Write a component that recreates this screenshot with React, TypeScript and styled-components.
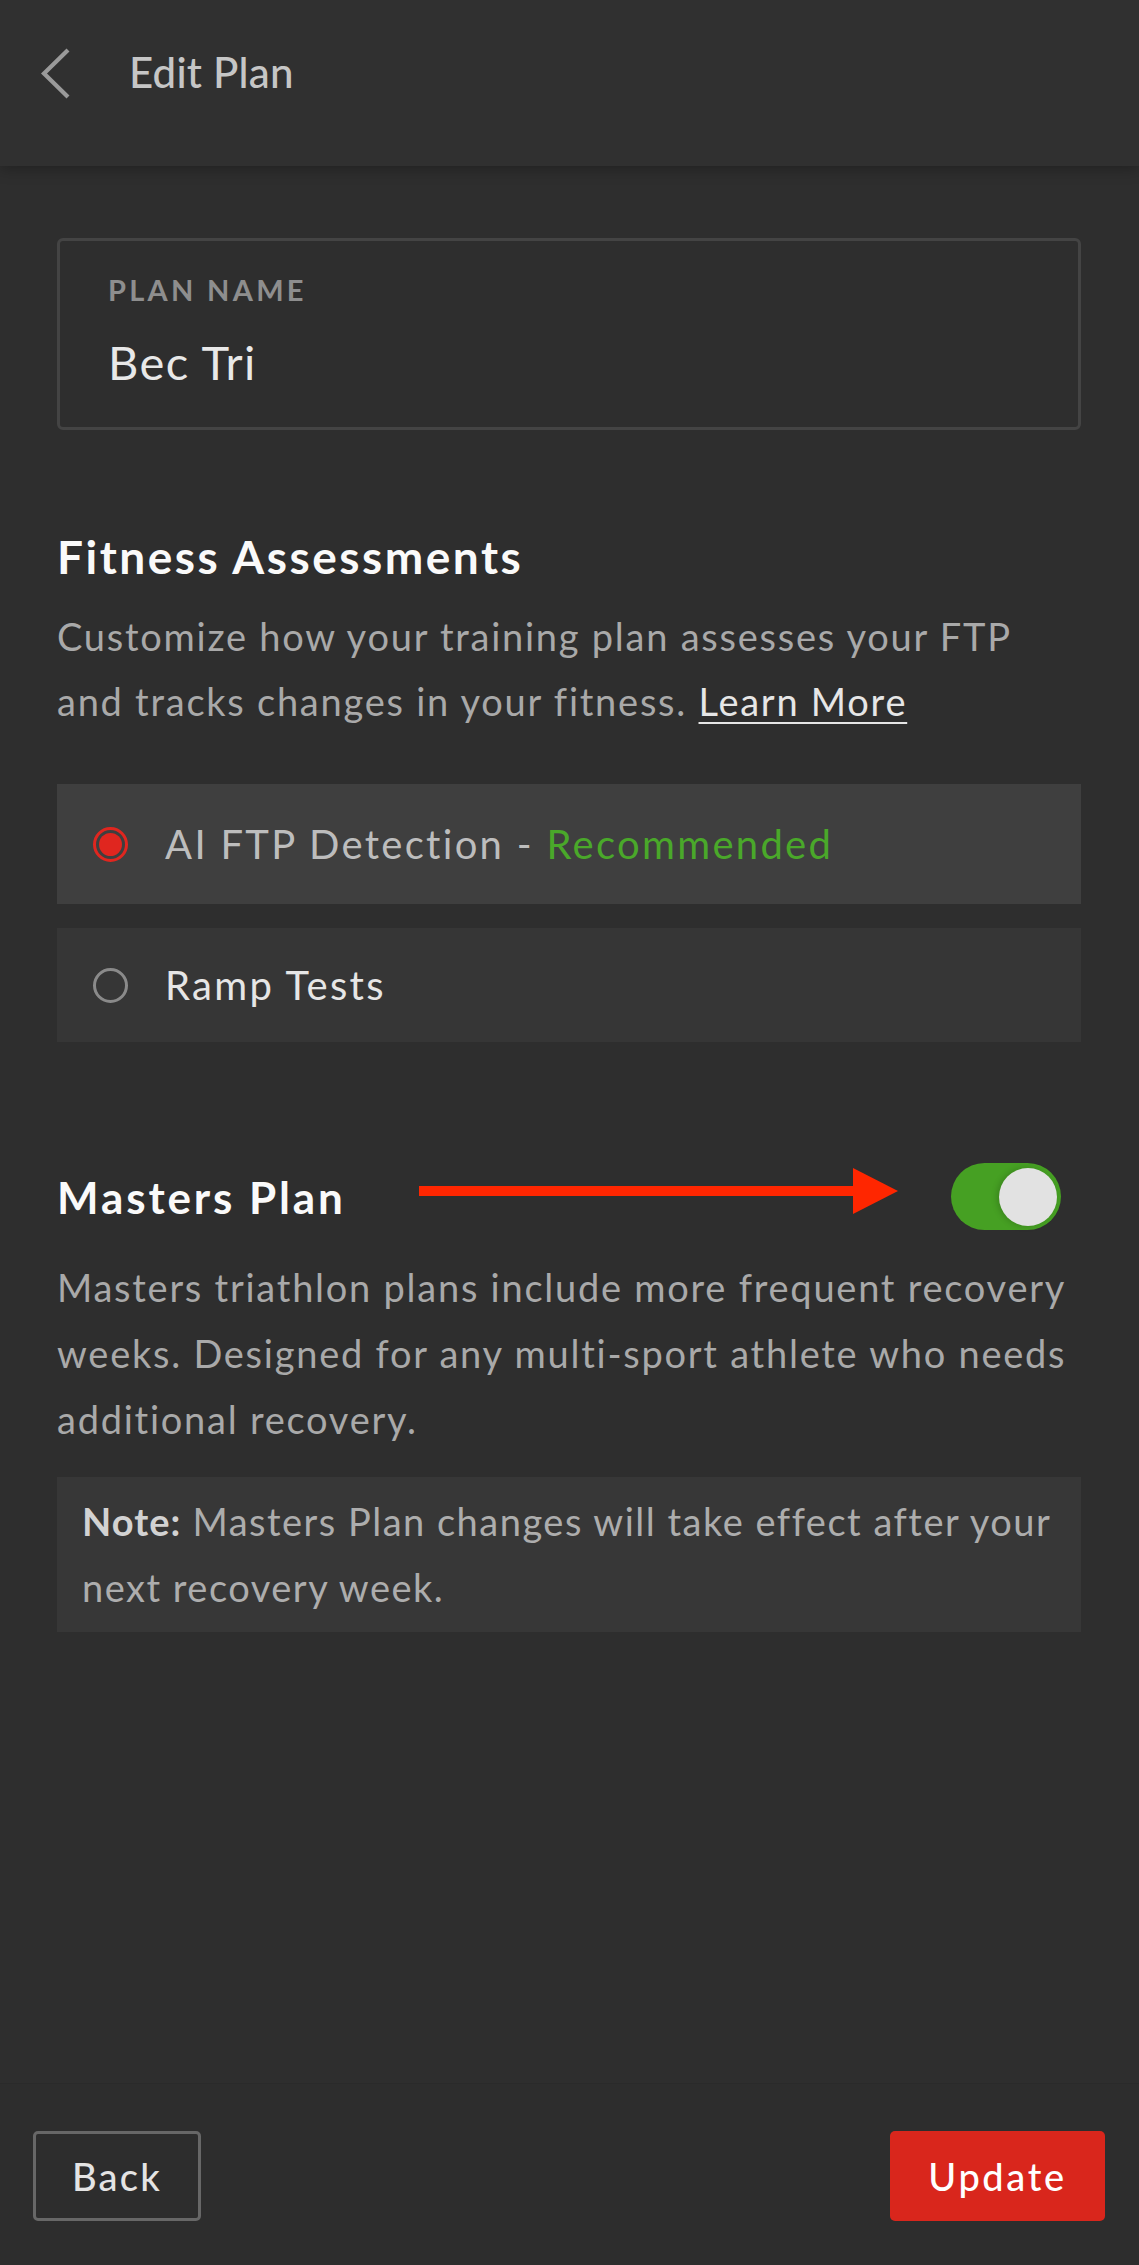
import React from "react";
import styled, { createGlobalStyle } from "styled-components";

const Global = createGlobalStyle`
  * { box-sizing: border-box; }
  html, body { margin: 0; padding: 0; background: #2e2e2e; }
  body { font-family: "Lato", "Noto Sans", sans-serif; -webkit-font-smoothing: antialiased; }
`;

const Page = styled.div`
  min-height: 100vh;
  display: flex;
  flex-direction: column;
  background: #2e2e2e;
`;

const Header = styled.header`
  height: 166px;
  flex-shrink: 0;
  background: #303030;
  display: flex;
  align-items: flex-start;
  padding: 48px 0 0 40px;
  gap: 59px;
  box-shadow: 0 3px 14px rgba(0, 0, 0, 0.28);
  position: relative;
  z-index: 1;
`;

const Title = styled.h1`
  margin: 0;
  font-size: 42px;
  line-height: 48px;
  font-weight: 500;
  color: #c6c6c6;
  letter-spacing: 0.2px;
`;

const Main = styled.main`
  flex: 1;
  display: flex;
  flex-direction: column;
  padding: 72px 58px 0 57px;
`;

const NameBox = styled.div`
  height: 192px;
  border: 3px solid #444444;
  border-radius: 6px;
  padding: 31px 48px 0;
  display: flex;
  flex-direction: column;
`;

const FieldLabel = styled.div`
  font-size: 29px;
  line-height: 36px;
  font-weight: 700;
  color: #8e8e8e;
  letter-spacing: 3.3px;
`;

const FieldValue = styled.div`
  margin-top: 26px;
  font-size: 47px;
  line-height: 56px;
  color: #e8e8e8;
  letter-spacing: 1.4px;
`;

const SectionTitle = styled.h2<{ $top?: number }>`
  margin: ${(p) => p.$top ?? 0}px 0 0;
  font-size: 46px;
  line-height: 54px;
  font-weight: 700;
  color: #fafafa;
  letter-spacing: 2.5px;
`;

const Paragraph = styled.p<{ $top: number; $lh: number }>`
  margin: ${(p) => p.$top}px 0 0;
  font-size: 38px;
  line-height: ${(p) => p.$lh}px;
  color: #a9a9a9;
  letter-spacing: 1.75px;
`;

const LearnMore = styled.a`
  color: #e6e6e6;
  text-decoration: underline;
  text-decoration-thickness: 2px;
  text-underline-offset: 6px;
`;

const Options = styled.div`
  margin-top: 50px;
  display: flex;
  flex-direction: column;
  gap: 24px;
`;

const Option = styled.label<{ $selected?: boolean }>`
  height: ${(p) => (p.$selected ? 120 : 114)}px;
  background: ${(p) => (p.$selected ? "#3f3f3f" : "#363636")};
  display: flex;
  align-items: center;
  padding-left: 36px;
  gap: 37px;
  cursor: pointer;
`;

const Radio = styled.span<{ $selected?: boolean }>`
  width: 35px;
  height: 35px;
  flex-shrink: 0;
  border-radius: 50%;
  border: 3px solid ${(p) => (p.$selected ? "#e0261f" : "#8a8a8a")};
  display: flex;
  align-items: center;
  justify-content: center;
  &::after {
    content: "";
    display: ${(p) => (p.$selected ? "block" : "none")};
    width: 23px;
    height: 23px;
    border-radius: 50%;
    background: #e0261f;
  }
`;

const OptionText = styled.span<{ $muted?: boolean }>`
  font-size: 40px;
  line-height: 48px;
  letter-spacing: 2.3px;
  color: ${(p) => (p.$muted ? "#bdbdbd" : "#e6e6e6")};
`;

const Recommended = styled.span`
  color: #4aa82a;
`;

const ToggleRow = styled.div`
  margin-top: 121px;
  display: flex;
  align-items: center;
`;

const RowTitle = styled.h2`
  margin: 0;
  font-size: 44px;
  line-height: 54px;
  font-weight: 700;
  color: #fafafa;
  letter-spacing: 2.9px;
`;

const ArrowSvg = styled.svg`
  margin-left: 73px;
  flex-shrink: 0;
`;

const Switch = styled.button<{ $on: boolean }>`
  margin-left: auto;
  margin-right: 20px;
  width: 110px;
  height: 67px;
  border: none;
  border-radius: 34px;
  padding: 0 4px;
  background: ${(p) => (p.$on ? "#46a023" : "#666")};
  display: flex;
  align-items: center;
  justify-content: ${(p) => (p.$on ? "flex-end" : "flex-start")};
  cursor: pointer;
`;

const Knob = styled.span`
  width: 58px;
  height: 58px;
  border-radius: 50%;
  background: #e2e2e2;
  box-shadow: -2px 0 6px rgba(0, 0, 0, 0.18);
`;

const Note = styled.div`
  margin-top: 25px;
  background: #373737;
  padding: 11px 8px 12px 25px;
  font-size: 38px;
  line-height: 66px;
  color: #adadad;
  letter-spacing: 1.5px;
`;

const NoteLabel = styled.strong`
  font-weight: 700;
  color: #d2d2d2;
  letter-spacing: 1px;
`;

const Footer = styled.footer`
  height: 182px;
  flex-shrink: 0;
  background: #2d2d2d;
  border-top: 1px solid #2a2a2a;
  display: flex;
  justify-content: space-between;
  align-items: flex-start;
  padding: 47px 34px 0 33px;
`;

const Button = styled.button<{ $primary?: boolean }>`
  height: 90px;
  width: ${(p) => (p.$primary ? 215 : 168)}px;
  border-radius: 5px;
  border: ${(p) => (p.$primary ? "none" : "3px solid #676767")};
  background: ${(p) => (p.$primary ? "#d9261c" : "transparent")};
  color: ${(p) => (p.$primary ? "#ffffff" : "#e4e4e4")};
  font-family: "Lato", "Noto Sans", sans-serif;
  font-size: 38px;
  font-weight: 500;
  letter-spacing: ${(p) => (p.$primary ? 2.6 : 2.2)}px;
  cursor: pointer;
`;

function Chevron() {
  return (
    <svg width="30" height="52" viewBox="0 0 30 52" aria-hidden>
      <polyline
        points="28,2 4,25.5 28,49"
        fill="none"
        stroke="#9a9a9a"
        strokeWidth="4.2"
        strokeLinejoin="miter"
      />
    </svg>
  );
}

function Arrow() {
  return (
    <ArrowSvg width="479" height="67" viewBox="0 0 479 67" aria-hidden>
      <rect x="0" y="23" width="440" height="10" fill="#ff2600" />
      <polygon points="434,5 479,28 434,51" fill="#ff2600" />
    </ArrowSvg>
  );
}

export default function App() {
  const [choice, setChoice] = React.useState<"ai" | "ramp">("ai");
  const [masters, setMasters] = React.useState(true);

  return (
    <Page>
      <Global />
      <Header>
        <Chevron />
        <Title>Edit Plan</Title>
      </Header>
      <Main>
        <NameBox>
          <FieldLabel>PLAN NAME</FieldLabel>
          <FieldValue>Bec Tri</FieldValue>
        </NameBox>

        <SectionTitle $top={100}>Fitness Assessments</SectionTitle>
        <Paragraph $top={20} $lh={65}>
          Customize how your training plan assesses your FTP and tracks changes in your fitness.{" "}
          <LearnMore>Learn More</LearnMore>
        </Paragraph>

        <Options>
          <Option $selected={choice === "ai"} onClick={() => setChoice("ai")}>
            <Radio $selected={choice === "ai"} />
            <OptionText $muted>
              AI FTP Detection - <Recommended>Recommended</Recommended>
            </OptionText>
          </Option>
          <Option $selected={choice === "ramp"} onClick={() => setChoice("ramp")}>
            <Radio $selected={choice === "ramp"} />
            <OptionText>Ramp Tests</OptionText>
          </Option>
        </Options>

        <ToggleRow>
          <RowTitle>Masters Plan</RowTitle>
          <Arrow />
          <Switch $on={masters} onClick={() => setMasters(!masters)} aria-label="Masters Plan">
            <Knob />
          </Switch>
        </ToggleRow>

        <Paragraph $top={24} $lh={66}>
          Masters triathlon plans include more frequent recovery weeks. Designed for any
          multi-sport athlete who needs additional recovery.
        </Paragraph>

        <Note>
          <NoteLabel>Note:</NoteLabel> Masters Plan changes will take effect after your next
          recovery week.
        </Note>
      </Main>
      <Footer>
        <Button>Back</Button>
        <Button $primary>Update</Button>
      </Footer>
    </Page>
  );
}
